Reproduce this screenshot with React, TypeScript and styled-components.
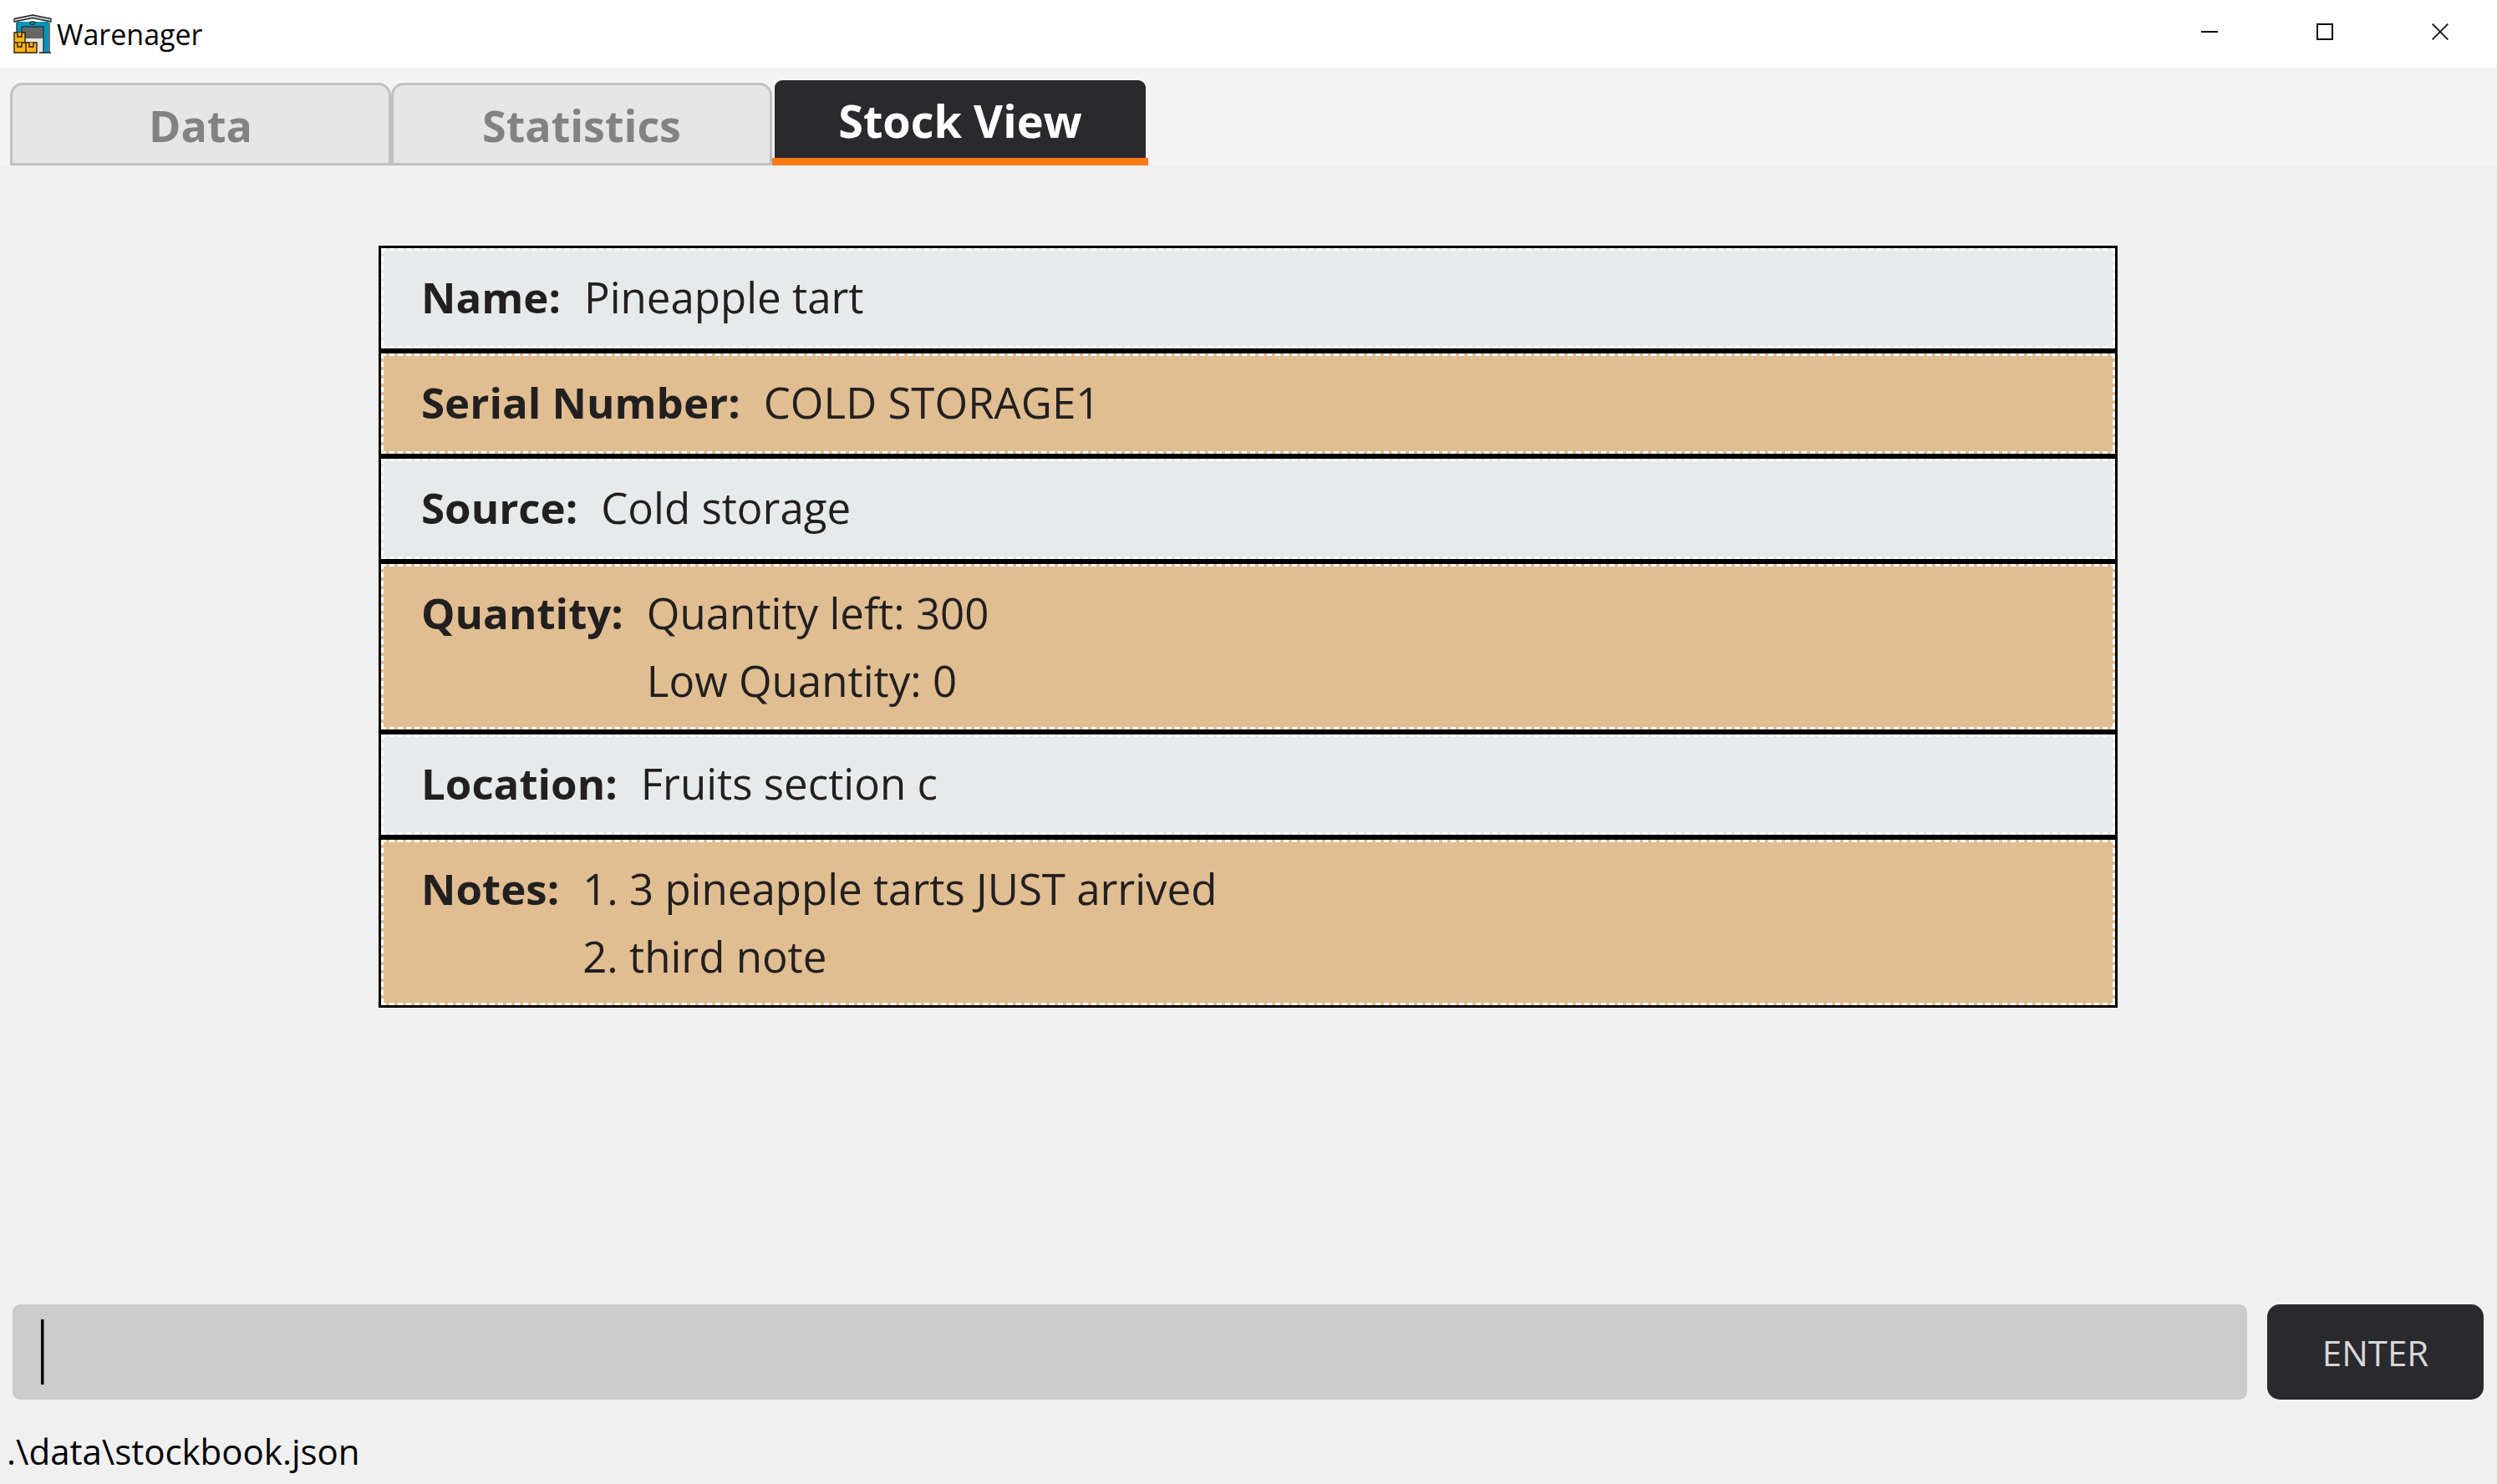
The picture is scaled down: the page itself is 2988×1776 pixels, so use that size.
import React, { useState } from 'react';
import styled, { createGlobalStyle, css } from 'styled-components';

const GlobalStyle = createGlobalStyle`
  *, *::before, *::after { box-sizing: border-box; }
  body {
    margin: 0;
    background: #f0f0f0;
    color: #000;
    font-family: 'Segoe UI', 'Open Sans', 'Noto Sans', sans-serif;
  }
  button, input { font-family: inherit; }
`;

const Window = styled.div`
  display: flex;
  flex-direction: column;
  min-height: 100vh;
`;

const TitleBar = styled.header`
  display: flex;
  align-items: stretch;
  height: 81px;
  background: #fff;
`;

const Brand = styled.div`
  display: flex;
  flex: 1;
  align-items: center;
  gap: 6px;
  padding-left: 16px;
`;

const AppName = styled.h1`
  margin: 0;
  font-size: 34px;
  font-weight: 400;
  line-height: 48px;
`;

const WindowButton = styled.button`
  display: flex;
  align-items: center;
  justify-content: center;
  width: 138px;
  padding: 0 0 6px 2px;
  border: 0;
  background: transparent;
`;

const TabBar = styled.nav`
  display: flex;
  align-items: flex-end;
  height: 117px;
  padding-left: 12px;
  background: #f4f4f4;
`;

const Tab = styled.button<{ $active: boolean }>`
  padding: 0;
  font-weight: 700;
  ${({ $active }) =>
    $active
      ? css`
          display: flex;
          flex-direction: column;
          width: 450px;
          height: 102px;
          border: 0;
          border-bottom: 9px solid #f97b16;
          background: transparent;
          color: #fff;
          font-size: 54px;
        `
      : css`
          width: 456px;
          height: 99px;
          padding-top: 2px;
          border: 3px solid #c1c1c1;
          border-radius: 15px 15px 0 0;
          background: #e6e6e6;
          color: #828282;
          font-size: 52px;
        `}
`;

const ActiveFace = styled.span`
  display: flex;
  align-self: stretch;
  flex: 1;
  align-items: center;
  justify-content: center;
  margin: 0 3px;
  padding-top: 2px;
  border-radius: 9px 9px 0 0;
  background: #2a292e;
`;

const Content = styled.main`
  flex: 1;
  padding: 96px 454px 0 453px;
`;

const Details = styled.dl`
  margin: 0;
`;

const Row = styled.div<{ $accent: boolean }>`
  display: flex;
  gap: 28px;
  min-height: 126px;
  padding: 22px 48px 23px 48px;
  border: 3px solid #000;
  background:
    repeating-linear-gradient(90deg, #fff 0 6px, transparent 6px 10px) top / 100% 3px no-repeat,
    repeating-linear-gradient(90deg, #fff 0 6px, transparent 6px 10px) bottom / 100% 3px no-repeat,
    repeating-linear-gradient(#fff 0 6px, transparent 6px 10px) left / 3px 100% no-repeat,
    repeating-linear-gradient(#fff 0 6px, transparent 6px 10px) right / 3px 100% no-repeat,
    ${({ $accent }) => ($accent ? '#e0be91' : '#e6eaea')};
  background-origin: padding-box;
  background-clip: padding-box;
  color: #221f20;
  font-size: 51px;
  line-height: 72px;
`;

const Label = styled.dt`
  font-weight: 700;
  white-space: nowrap;
`;

const Values = styled.dd`
  display: flex;
  flex-direction: column;
  gap: 9px;
  margin: 0;
`;

const CommandForm = styled.form`
  display: flex;
  gap: 24px;
  padding: 0 16px 0 15px;
`;

const CommandField = styled.label`
  display: flex;
  flex: 1;
  align-items: center;
  height: 114px;
  padding-left: 34px;
  border-radius: 9px;
  background: #ccc;
`;

const Caret = styled.span`
  width: 4px;
  height: 78px;
  border: solid #666;
  border-width: 0 1px 0 0;
  background: #000;
`;

const CommandInput = styled.input`
  flex: 1;
  height: 78px;
  padding: 0;
  border: 0;
  outline: 0;
  background: transparent;
  font-size: 51px;
`;

const EnterButton = styled.button`
  width: 259px;
  padding: 0;
  border: 0;
  border-radius: 15px;
  background: #2a292e;
  color: #d8d8d8;
  font-size: 42px;
`;

const StatusBar = styled.footer`
  padding: 32px 8px 9px;
  font-size: 42px;
  line-height: 60px;
`;

const WarehouseIcon = () => (
  <svg width="46" height="47" viewBox="0 0 46 47" aria-hidden="true">
    <path d="M4 9h38v37H4z" fill="#0c93b8" />
    <path d="M10 16h26v30H10z" fill="#e6e6e6" />
    <path d="M10 16h26v13H10z" fill="#666" />
    <path d="M4 10v12M43 10v36M10 21v-6h26v31" fill="none" stroke="#173f4b" strokeWidth="1.4" />
    <path d="M1 5.500 23 1l22 4.500V9L23 4.500 1 9z" fill="#d5d5d5" stroke="#222" strokeWidth="1.3" strokeLinejoin="round" />
    <rect x="20" y="9" width="6" height="3" rx="1.5" fill="#35aac8" stroke="#12313b" strokeWidth="1.4" />
    <path d="M31 46h14" stroke="#222" strokeWidth="1.6" />
    <g fill="#fbb41c" stroke="#2b2109" strokeWidth="1.4">
      <path d="M1 22h13v12H1zM1 34h14v12H1zM15 34h13v12H15z" />
      <path d="M5 22v5h5v-5M5 34v5h5v-5M19 34v5h5v-5" fill="#fbb41c" />
    </g>
  </svg>
);

const MinimiseIcon = () => (
  <svg width="20" height="20" viewBox="0 0 20 20" aria-hidden="true">
    <path d="M0 10h20" stroke="#000" strokeWidth="2" />
  </svg>
);

const MaximiseIcon = () => (
  <svg width="20" height="20" viewBox="0 0 20 20" aria-hidden="true">
    <path d="M1 1h18v18H1z" fill="none" stroke="#000" strokeWidth="2" />
  </svg>
);

const CloseIcon = () => (
  <svg width="20" height="20" viewBox="0 0 20 20" aria-hidden="true">
    <path d="m.7.7 18.6 18.6M19.3.7.7 19.3" stroke="#111" strokeWidth="1.8" />
  </svg>
);

const tabs = ['Data', 'Statistics', 'Stock View'];

const fields = [
  { label: 'Name:', values: ['Pineapple tart'] },
  { label: 'Serial Number:', values: ['COLD STORAGE1'] },
  { label: 'Source:', values: ['Cold storage'] },
  { label: 'Quantity:', values: ['Quantity left: 300', 'Low Quantity: 0'] },
  { label: 'Location:', values: ['Fruits section c'] },
  { label: 'Notes:', values: ['1. 3 pineapple tarts JUST arrived', '2. third note'] },
];

export default function App() {
  const [active, setActive] = useState('Stock View');
  const [command, setCommand] = useState('');

  return (
    <>
      <GlobalStyle />
      <Window>
        <TitleBar>
          <Brand>
            <WarehouseIcon />
            <AppName>Warenager</AppName>
          </Brand>
          <WindowButton aria-label="Minimise"><MinimiseIcon /></WindowButton>
          <WindowButton aria-label="Maximise"><MaximiseIcon /></WindowButton>
          <WindowButton aria-label="Close"><CloseIcon /></WindowButton>
        </TitleBar>
        <TabBar>
          {tabs.map((tab) => (
            <Tab key={tab} $active={tab === active} onClick={() => setActive(tab)}>
              {tab === active ? <ActiveFace>{tab}</ActiveFace> : tab}
            </Tab>
          ))}
        </TabBar>
        <Content>
          <Details>
            {fields.map(({ label, values }, i) => (
              <Row key={label} $accent={i % 2 === 1}>
                <Label>{label}</Label>
                <Values>
                  {values.map((value) => (
                    <span key={value}>{value}</span>
                  ))}
                </Values>
              </Row>
            ))}
          </Details>
        </Content>
        <CommandForm onSubmit={(e) => e.preventDefault()}>
          <CommandField>
            {command === '' && <Caret />}
            <CommandInput
              aria-label="Command"
              value={command}
              onChange={(e) => setCommand(e.target.value)}
            />
          </CommandField>
          <EnterButton type="submit">ENTER</EnterButton>
        </CommandForm>
        <StatusBar>.\data\stockbook.json</StatusBar>
      </Window>
    </>
  );
}
